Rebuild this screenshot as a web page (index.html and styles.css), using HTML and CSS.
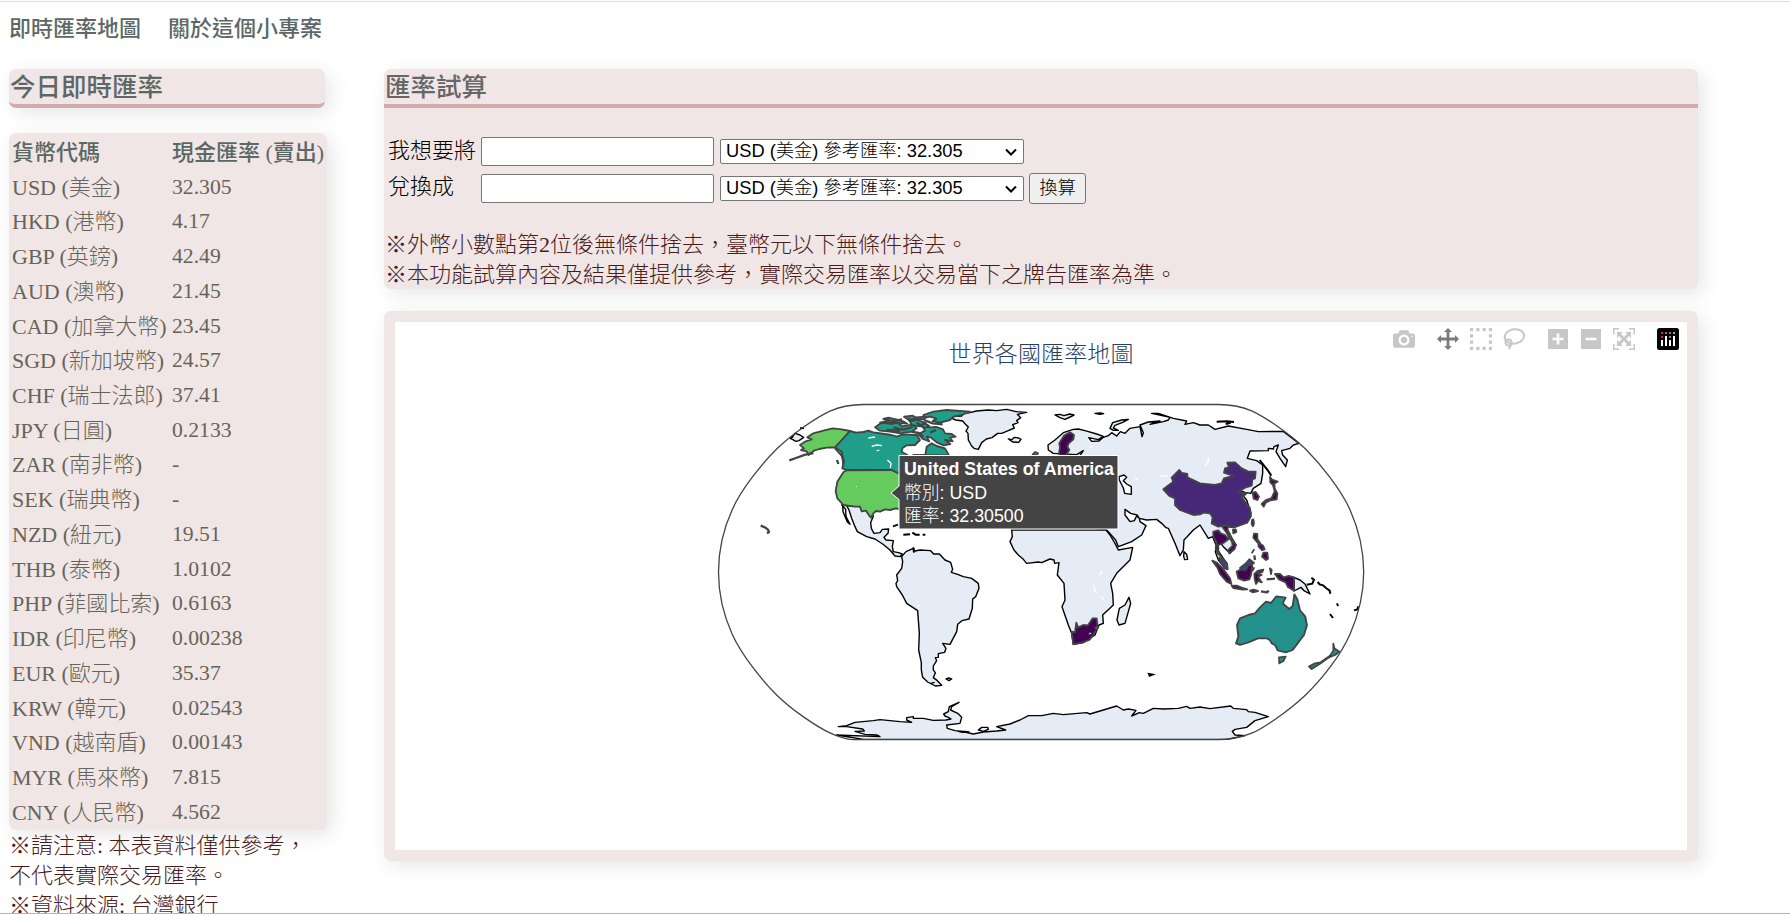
FILE: index.html
```html
<!DOCTYPE html>
<html lang="zh-Hant">
<head>
<meta charset="utf-8">
<title>即時匯率地圖</title>
<link rel="stylesheet" href="styles.css">
</head>
<body>
<nav class="nav"><a>即時匯率地圖</a><a>關於這個小專案</a></nav>
<main class="layout">
  <aside class="side">
    <h2 class="heading card">今日即時匯率</h2>
    <table class="rates card">
      <tr><th>貨幣代碼</th><th>現金匯率 (賣出)</th></tr>
      <tr><td>USD (美金)</td><td>32.305</td></tr>
      <tr><td>HKD (港幣)</td><td>4.17</td></tr>
      <tr><td>GBP (英鎊)</td><td>42.49</td></tr>
      <tr><td>AUD (澳幣)</td><td>21.45</td></tr>
      <tr><td>CAD (加拿大幣)</td><td>23.45</td></tr>
      <tr><td>SGD (新加坡幣)</td><td>24.57</td></tr>
      <tr><td>CHF (瑞士法郎)</td><td>37.41</td></tr>
      <tr><td>JPY (日圓)</td><td>0.2133</td></tr>
      <tr><td>ZAR (南非幣)</td><td>-</td></tr>
      <tr><td>SEK (瑞典幣)</td><td>-</td></tr>
      <tr><td>NZD (紐元)</td><td>19.51</td></tr>
      <tr><td>THB (泰幣)</td><td>1.0102</td></tr>
      <tr><td>PHP (菲國比索)</td><td>0.6163</td></tr>
      <tr><td>IDR (印尼幣)</td><td>0.00238</td></tr>
      <tr><td>EUR (歐元)</td><td>35.37</td></tr>
      <tr><td>KRW (韓元)</td><td>0.02543</td></tr>
      <tr><td>VND (越南盾)</td><td>0.00143</td></tr>
      <tr><td>MYR (馬來幣)</td><td>7.815</td></tr>
      <tr><td>CNY (人民幣)</td><td>4.562</td></tr>
    </table>
    <p class="note">※請注意: 本表資料僅供參考，<br>不代表實際交易匯率。<br>※資料來源: 台灣銀行</p>
  </aside>
  <div class="content">
    <section class="calc card">
      <h2 class="heading">匯率試算</h2>
      <form class="form">
        <div class="row"><label>我想要將</label><input type="text"><span class="pick"><select><option>USD (美金) 參考匯率: 32.305</option></select><svg class="chevron" viewBox="0 0 12 8"><path d="M1 1.500l5 5 5-5"/></svg></span></div>
        <div class="row"><label>兌換成</label><input type="text"><span class="pick"><select><option>USD (美金) 參考匯率: 32.305</option></select><svg class="chevron" viewBox="0 0 12 8"><path d="M1 1.500l5 5 5-5"/></svg></span><button type="button">換算</button></div>
      </form>
      <p class="note">※外幣小數點第2位後無條件捨去，臺幣元以下無條件捨去。<br>※本功能試算內容及結果僅提供參考，實際交易匯率以交易當下之牌告匯率為準。</p>
    </section>
    <section class="mapcard card">
      <svg class="map" viewBox="395 322 1292 528">
        <text class="maptitle" x="1041" y="362" text-anchor="middle" textLength="185">世界各國匯率地圖</text>
        <g transform="translate(700 390) scale(.333333)">
          <g class="land">
            <path d="M425 345L440 347 447 360 455 385 465 410 472 425 500 440 525 447 548 462 570 480 585 498 600 500 607 492 595 488 580 485 577 470 580 452 558 450 552 442 564 430 566 417 547 418 540 428 522 430 514 415 512 398 520 378 505 360 485 350Z"/>
            <path d="M428 347L437 358 438 380 450 403 442 396 429 365Z"/>
            <path d="M273 146L285 130 300 135 311 142 297 152 288 154Z"/>
            <path d="M750 82L764 79 785 78 792 70 810 68 829 63 865 60 890 62 920 58 948 65 980 67 952 73 962 83 950 92 954 98 938 104 943 114 925 122 905 130 893 130 876 143 859 147 845 158 835 178 822 175 815 168 805 150 804 130 798 123 805 111 795 101 788 93 767 90Z"/>
            <path d="M925 147L936 149 942 142 956 144 963 148 956 157 938 156Z"/>
            <path d="M1065 75L1080 73 1092 77 1109 72 1122 75 1110 81 1095 88 1080 83ZM1185 70l14 3 12-2-10-2Z"/>
            <path d="M1230 115L1238 98 1265 90 1285 88 1268 97 1245 106 1240 114 1255 121 1240 121Z"/>
            <path d="M1045 180L1044 165 1065 150 1090 128 1120 118 1135 117 1155 122 1190 132 1210 139 1195 149 1166 143 1175 154 1197 153 1210 142 1225 137 1235 128 1250 138 1261 125 1275 130 1290 115 1320 110 1326 140 1330 128 1320 105 1345 96 1380 93 1350 103 1390 95 1405 90 1410 82 1355 70 1375 70 1420 85 1460 93 1455 103 1480 98 1500 105 1525 105 1545 118 1585 108 1640 118 1675 125 1750 124 1797 160 1780 165 1770 175 1745 182 1748 195 1762 210 1757 230 1740 205 1728 185 1735 165 1722 170 1720 177 1705 175 1705 182 1650 183 1642 205 1670 212 1688 225 1688 250 1683 280 1660 295 1652 310 1635 307 1615 300 1640 330 1653 370 1600 412 1575 410 1590 440 1608 465 1590 490 1570 470 1555 450 1553 480 1580 520 1575 535 1555 510 1546 485 1550 470 1538 440 1525 445 1500 405 1480 420 1460 442 1452 450 1450 480 1440 497 1425 460 1405 415 1398 413 1385 400 1370 388 1340 390 1318 385 1311 375 1292 370 1275 358 1275 375 1290 395 1303 392 1310 378 1318 385 1320 395 1338 407 1325 435 1295 455 1255 470 1247 450 1220 420 1140 410 1140 196 1150 182 1130 194 1060 190Z"/>
            <path d="M1452 485l8 8 3 15-9 1-3-10Z"/>
            <path d="M935 420L937 440 930 455 942 480 955 495 970 508 980 520 1015 516 1025 518 1050 507 1062 510 1064 520 1077 518 1072 555 1092 580 1095 630 1086 650 1098 685 1105 705 1115 730 1120 763 1150 758 1185 735 1197 705 1210 700 1208 675 1240 645 1238 610 1232 580 1250 550 1290 510 1298 472 1255 480 1245 460 1230 435 1218 420Z"/>
            <path d="M1287 622L1292 640 1275 700 1257 705 1251 690 1258 655 1275 645Z"/>
            <path d="M605 500L618 485 640 475 645 483 660 480 692 482 701 492 718 492 735 510 752 517 758 538 754 547 775 554 790 560 815 565 835 580 837 595 827 620 818 627 817 655 807 687 786 692 773 703 770 725 750 763 728 760 738 775 734 787 715 791 715 802 706 803 710 812 700 828 700 840 706 848 700 863 712 872 725 886 706 888 683 876 668 862 664 840 664 818 656 780 658 730 653 662 620 640 607 615 590 590 588 580 593 572 590 555 605 535 608 515Z"/>
            <path d="M410 1035L540 1040 530 1035 495 1033 465 1024 493 1023 488 1017 440 1010 415 1010 440 1007 465 997 520 992 540 989 600 995 635 997 620 990 620 983 640 980 640 985 670 985 700 991 738 990 753 987 745 982 735 978 731 972 745 965 748 950 777 937 755 950 752 960 773 970 785 982 780 1000 740 1005 742 1015 765 1022 785 1024 820 1032 850 1026 890 1023 917 1020 890 1010 930 1002 960 990 985 977 1025 977 1060 970 1090 974 1160 968 1170 972 1250 948 1270 960 1285 957 1308 961 1295 978 1318 968 1330 970 1360 955 1392 957 1435 955 1460 949 1470 955 1500 951 1530 956 1592 948 1600 955 1640 959 1645 965 1665 967 1705 980 1665 992 1640 1012 1605 1018 1597 1024 1605 1035 1635 1037 1580 1048 490 1048Z"/>
            <path d="M835 1020l10-8 18 0 2 6-15 6ZM738 867l8-3 9 3-8 5ZM692 880l12-3M775 1024l20 0 12 2-20 1Z"/>
            <path d="M1782 562L1800 570 1815 582 1823 598 1830 612 1812 602 1803 592 1782 603Z"/>
          </g>
          <g class="thin">
            <path d="M1820 584l17-3 5-12M1834 563l10 8M1853 576l6 7 10 3 10 9 10 7 2 9M1911 640l3 8M1890 672l9 12M1962 661l10-3 3-9M1347 852l10 2-8 3ZM579 409l15-5M610 434l20-1M637 428l10 6 12 0M668 434l8 0M640 472l2 16M300 115l12-1M270 146l9-7M1550 95l30-1 22 2M1577 102l15-4M1679 210l25 32 10 15"/>
          </g>
          <path class="sea" d="M1257 260L1272 255 1280 262 1270 272 1280 282 1294 290 1294 313 1274 310 1270 294 1258 270Z"/>
          <g class="country">
            <path class="us" d="M430 247L440 241 575 240 600 252 600 358 588 355 570 360 555 358 540 365 528 363 520 370 513 383 507 376 498 362 485 364 480 350 465 350 430 345 412 325 407 303 412 275Z"/>
            <path class="us" d="M450 123L425 118 398 115 370 122 340 130 322 142 335 148 315 155 300 165 312 175 303 180 320 184 326 195 342 182 358 177 380 173 400 172 425 180 431 205 424 196 405 175Z"/>
            <path class="chain" d="M268 211l20-7 28-10 24-5M411 210l4 12M424 190l5 20 2 24"/>
            <path class="ca" d="M450 123L468 128 490 126 505 122 520 127 555 132 575 135 590 140 610 133 650 135 660 150 645 165 620 166 607 175 605 185 622 195 622 252 600 252 575 240 440 240 427 235 432 215 425 185 405 172Z"/>
            <path class="ca" d="M640 195L676 195 680 170 695 160 710 168 735 175 747 196Z"/>
            <path class="ca" d="M655 133L675 122 668 108 690 112 710 111 729 118 735 130 755 132 767 140 750 143 758 154 735 150 751 162 731 166 710 157 693 143 680 140 688 154 669 147Z"/>
            <path class="ca" d="M670 75L700 65 740 60 810 65 785 75 760 80 750 90 720 98 698 93 710 86 690 80 672 84Z"/>
            <path class="ca" d="M525 112L545 98 575 102 592 98 607 109 640 103 650 115 635 125 600 130 570 125 540 122Z"/>
            <path class="ca" d="M540 98l30-7-20-4 15-4 27 6 20 6 10 6-30-2ZM612 80l25-3 10 5 30-2-5 8-25-2-20 4ZM630 95l20-6 28 10-18 10-25-4ZM662 105l12-5 14 8-16 6Z"/>
            <path class="chain" d="M570 96l36-8M580 113l30 6 28-8M560 120l40 3M650 98l20 14M672 90l26 10 30 3M625 84l4 10M634 125l22 4 14 12M690 128l18-8"/>
            <path class="pu" d="M1077 190L1080 172 1078 160 1092 137 1110 127 1122 135 1120 148 1106 160 1102 170 1108 180 1097 196 1078 196Z"/>
            <path class="eu" d="M998 193l8-7 8 4-3 5Z"/>
            <path class="cn" d="M1390 298L1420 275 1415 263 1438 240 1446 249 1462 252 1462 262 1500 280 1545 285 1565 280 1572 265 1600 258 1572 248 1575 235 1587 232 1582 218 1605 217 1625 235 1645 245 1667 245 1665 265 1657 268 1655 287 1635 293 1615 305 1640 310 1625 322 1650 355 1653 378 1642 398 1600 413 1580 405 1555 410 1535 400 1538 382 1530 370 1510 368 1500 373 1480 375 1440 360 1425 345 1425 325 1408 318Z"/>
            <path class="pu" d="M1658 308L1667 306 1677 320 1672 330 1661 326ZM1710 260L1716 269 1733 275 1723 280 1724 295 1732 310 1730 328 1710 331 1697 338 1691 350 1685 342 1698 330 1715 324 1724 304 1719 285 1711 277Z"/>
            <path class="pu" d="M1540 425L1555 421 1562 430 1575 435 1586 447 1570 459 1555 465 1555 485 1563 500 1553 490 1547 475 1550 456 1540 440ZM1567 410L1583 405 1583 420 1595 443 1608 465 1603 478 1588 490 1585 480 1598 467 1596 455 1580 428ZM1599 420l8-2 2 8-9 4ZM1656 390l4-2 2 12-3 9-4-7ZM1662 431l10 1 0 15 10 15-9-4-13-15ZM1675 460l14 7 5 11-8 2-10-10ZM1690 488l12 0 2 18-6 4-12-10ZM1655 490l8-12"/>
            <path class="my" d="M1557 504L1568 505 1581 520 1583 538 1575 535 1562 518ZM1620 534L1638 520 1648 508 1662 519 1650 525 1643 537 1628 542Z"/>
            <path class="pu" d="M1537 512L1550 518 1568 535 1590 565 1594 582 1580 575 1560 552 1552 532ZM1610 545L1622 539 1637 541 1645 525 1657 525 1653 555 1648 568 1633 572 1615 565ZM1663 552L1673 543 1690 539 1687 546 1672 550 1685 555 1674 560 1685 577 1675 572 1668 582 1664 567ZM1595 587L1610 587 1625 593 1642 598 1628 599 1600 594ZM1650 602l10-3 14 4-16 4ZM1710 535l5 5-2 12ZM1725 552l15 0 11 10 15-4 16 4 0 40-18-11-7-14-20-9Z"/>
            <path class="chain" d="M1683 604l18 3 5-5M1700 568l25-2M1662 532l-6 12M1665 510l-2-14"/>
            <path class="au" d="M1620 685L1645 675 1665 670 1680 652 1698 635 1713 639 1729 619 1757 623 1748 640 1768 657 1778 648 1783 613 1792 628 1800 661 1816 680 1821 706 1812 735 1795 757 1778 780 1757 787 1733 781 1725 765 1715 760 1710 751 1700 745 1674 745 1645 757 1620 765 1608 760 1615 740 1611 705ZM1737 802L1757 800 1750 813 1738 820Z"/>
            <path class="au" d="M1900 761L1903 775 1918 785 1905 795 1885 803 1862 820 1835 837 1827 830 1845 820 1862 817 1890 797 1900 782Z"/>
            <path class="pu" d="M1115 725L1125 727 1129 698 1134 712 1150 705 1164 706 1178 685 1190 685 1193 713 1180 735 1168 750 1145 758 1120 763Z"/>
            <path class="lesotho" d="M1166 731l5-4 4 3-6 5ZM1185 712l5-2 1 5-5 0Z"/>
            <path class="chain" d="M182 407l13 5 9 7 3 7-6 4"/>
          </g>
          <path class="inner" d="M505 144l20-3M515 169l15-4 16 2M530 183l8-3M562 210l11 10-2 14M469 289l1 1M1515 226l9-8 1-14M1380 259l22-1M1305 265l8 4M1170 173l6-4M1183 585l0 14 8 10M1196 556l6-5 4-7M1207 618l2 14M653 645l5 4"/>
        </g>
        <path class="frame" d="M1363.7 572C1363.7 551.5 1359 530 1349.9 509.6 1341 489.5 1320 463.5 1305.3 448.8 1288 432.5 1265 417 1251.7 410.8 1241 406.5 1232 404.5 1218.6 404.5H863.6C850 404.5 841 406.5 830.5 410.8 817 417 794 432.5 776.9 448.8 762 463.5 741 489.5 732.3 509.6 723 530 718.5 551.5 718.5 572S723 614 732.3 634.4 762 680.5 776.9 695.2 817 727 830.5 733.2 850 739.7 863.6 739.7H1218.6C1232 739.7 1241 737.5 1251.7 733.2S1288 711.5 1305.3 695.2 1341 654.5 1349.9 634.4 1363.7 592.5 1363.7 572Z"/>
        <path class="tip" d="M891 493l8-7v-30.500h219v73.500H899v-29.500z"/>
        <g class="tiptext">
          <text x="904" y="474.500" font-weight="700" textLength="210">United States of America</text>
          <text x="904" y="498.500">幣別: USD</text>
          <text x="904" y="522">匯率: 32.30500</text>
        </g>
        <g class="tools">
          <path transform="translate(1393 328) scale(.022 -.022) translate(0 -850)" d="m500 450c-83 0-150-67-150-150 0-83 67-150 150-150 83 0 150 67 150 150 0 83-67 150-150 150z m400 150h-120c-16 0-34 13-39 29l-31 93c-6 15-23 28-40 28h-340c-16 0-34-13-39-28l-31-94c-6-15-23-28-40-28h-120c-55 0-100-45-100-100v-450c0-55 45-100 100-100h800c55 0 100 45 100 100v450c0 55-45 100-100 100z m-400-550c-138 0-250 112-250 250 0 138 112 250 250 250 138 0 250-112 250-250 0-138-112-250-250-250z m365 380c-19 0-35 16-35 35 0 19 16 35 35 35 19 0 35-16 35-35 0-19-16-35-35-35z"/>
          <path class="active" d="M1448 328l4 4h-2.600v5.600h5.600v-2.600l4 4-4 4v-2.600h-5.600v5.600h2.600l-4 4-4-4h2.600v-5.600h-5.600v2.600l-4-4 4-4v2.600h5.600v-5.600h-2.600z"/>
          <path transform="translate(1470 328) scale(.022 -.022) translate(0 -850)" d="m0 850l0-143 143 0 0 143-143 0z m286 0l0-143 143 0 0 143-143 0z m285 0l0-143 143 0 0 143-143 0z m286 0l0-143 143 0 0 143-143 0z m-857-286l0-143 143 0 0 143-143 0z m857 0l0-143 143 0 0 143-143 0z m-857-285l0-143 143 0 0 143-143 0z m857 0l0-143 143 0 0 143-143 0z m-857-286l0-143 143 0 0 143-143 0z m286 0l0-143 143 0 0 143-143 0z m285 0l0-143 143 0 0 143-143 0z m286 0l0-143 143 0 0 143-143 0z"/>
          <g class="line"><ellipse cx="1514.300" cy="336.500" rx="9.800" ry="7.200" transform="rotate(-8 1514 336)"/><circle cx="1508.500" cy="342.500" r="3"/><path d="M1511 344.500l-2 4.500"/></g>
          <path fill-rule="evenodd" d="M1548 329h20v20h-20zM1556.700 333.500v4.200h-4.200v2.600h4.200v4.200h2.600v-4.200h4.200v-2.600h-4.200v-4.200z"/>
          <path fill-rule="evenodd" d="M1581 329h20v20h-20zM1585.500 337.700v2.600h11v-2.600z"/>
          <path d="M1613 328h6v1.500h-4.500v4.500h-1.500zM1629 328h6v6h-1.500v-4.500h-4.500zM1613 344h1.500v4.500h4.500v1.500h-6zM1633.500 344h1.500v6h-6v-1.500h4.500zM1617 332h6l-2 2 3 3 3-3-2-2h6v6l-2-2-3 3 3 3 2-2v6h-6l2-2-3-3-3 3 2 2h-6v-6l2 2 3-3-3-3-2 2z"/>
          <rect x="1657" y="328" width="22" height="22" rx="2.500" fill="#000"/>
          <path fill="#fff" d="M1661 340h2v6h-2zM1665 336h2v10h-2zM1669 340h2v6h-2zM1673 336h2v10h-2z"/>
          <path fill="#e8175d" d="M1661 332h2v2h-2zM1661 336h2v2h-2z"/><path fill="#c0547c" d="M1665 332h2v2h-2z"/><path fill="#9a7b9b" d="M1669 332h2v2h-2zM1669 336h2v2h-2z"/><path fill="#6bbac5" d="M1673 332h2v2h-2z"/>
        </g>
      </svg>
    </section>
  </div>
</main>
</body>
</html>
```
FILE: styles.css
```css
* { box-sizing: border-box; }
body {
  margin: 0;
  height: 914px;
  overflow: hidden;
  display: flex;
  flex-direction: column;
  background: #fff;
  border-top: 1px solid #fff;
  border-bottom: 1px solid #a9b7c1;
  font-family: "Liberation Serif", "Noto Sans CJK TC", serif;
  font-size: 22px;
  font-weight: 300;
}
.nav {
  flex: none;
  height: 68px;
  padding: 11px 9px 0;
  border-top: 1px solid #dcdcdc;
  display: flex;
  gap: 27px;
  line-height: 32px;
  font-weight: 500;
  color: #5d6866;
}
.layout { display: flex; align-items: flex-start; padding-left: 9px; gap: 57px; }
.side { width: 318px; flex: none; }
.content { width: 1314px; flex: none; }
.card { background: #f0e6e5; border-radius: 7px; box-shadow: 5px 5px 20px rgba(0, 0, 0, .1); }
.heading {
  margin: 0;
  height: 39px;
  padding-left: 1px;
  line-height: 37px;
  font-size: 25.500px;
  font-weight: 500;
  color: #5d6866;
  border-bottom: 4px solid #d2acac;
}
.side .heading { width: 316px; }
.rates {
  display: block;
  width: 318px;
  height: 697px;
  margin-top: 25px;
  padding: 3px 4px 0 3px;
  border-spacing: 0;
  color: #66645a;
}
.rates tr { display: grid; grid-template-columns: 160px 1fr; height: 34.730px; line-height: 34px; white-space: nowrap; }
.rates td, .rates th { padding: 0; }
.rates th { font-weight: 500; text-align: left; color: #5d6866; }
.rates td + td { line-height: 32px; font-size: 21.700px; }
.note { margin: 1px 0 0; line-height: 30px; color: #4c1c1c; white-space: nowrap; }
.calc { height: 220px; }
.calc .heading { color: #666; }
.form { padding: 26px 0 0 4px; height: 122px; }
.row { display: flex; align-items: center; height: 34px; }
.row + .row { height: 40px; }
.row label { width: 93px; color: #000; line-height: 30px; }
.row + .row label { padding-bottom: 2px; }
.row input { width: 233px; height: 29px; margin: 0 6px 0 0; border: 1px solid #767676; border-radius: 2px; }
.pick { position: relative; display: flex; }
.chevron { position: absolute; right: 7px; top: 9px; width: 12px; height: 8px; fill: none; stroke: #000; stroke-width: 2; pointer-events: none; }
.row select {
  appearance: none;
  width: 304px;
  height: 25px;
  padding: 0 0 0 5px;
  background: #fff;
  border: 1px solid #767676;
  border-radius: 2px;
  font: 300 18.300px/22px "Liberation Sans", "Noto Sans CJK TC", sans-serif;
  color: #000;
}
.row button {
  width: 57px;
  height: 31px;
  margin-left: 5px;
  padding: 0;
  background: #efefef;
  border: 1px solid #767676;
  border-radius: 3px;
  font: 300 18.300px/28px "Liberation Sans", "Noto Sans CJK TC", sans-serif;
}
.calc .note { margin: 0; padding-left: 1px; line-height: 30px; }
.mapcard { margin-top: 22px; height: 550px; padding: 11px; }
.map { display: block; width: 1292px; height: 528px; background: #fff; }
.maptitle { font: 300 23px "Noto Sans CJK TC", sans-serif; fill: #2a3f5f; }
.land path, .sea { fill: #e5ecf6; stroke: #000; stroke-width: 4.200; stroke-linejoin: round; }
.sea { fill: #fff; }
.thin { fill: none; stroke: #000; stroke-width: 6; }
.inner { fill: none; stroke: #fff; stroke-width: 4; }
.country path { fill: none; stroke: #444; stroke-width: 5.500; stroke-linejoin: round; }
.country .chain { stroke-width: 7; }
.country .us { fill: #65cb5e; }
.country .ca { fill: #1f9e89; }
.country .au { fill: #23908b; }
.country .cn { fill: #472878; }
.country .pu { fill: #440154; }
.country .my { fill: #404387; }
.country .eu { fill: #d8d932; }
.country .lesotho { fill: #e5ecf6; stroke-width: 3; }
.frame { fill: none; stroke: #444; stroke-width: 1.300; }
.tip { fill: #444; stroke: #fff; stroke-width: 1; }
.tiptext { font-family: "Liberation Sans", "Noto Sans CJK TC", sans-serif; font-size: 17.800px; fill: #fff; }
.tools { fill: #c7c7c7; }
.tools .active { fill: #7c7c7c; }
.tools .line { fill: none; stroke: #c7c7c7; stroke-width: 2; }
```
